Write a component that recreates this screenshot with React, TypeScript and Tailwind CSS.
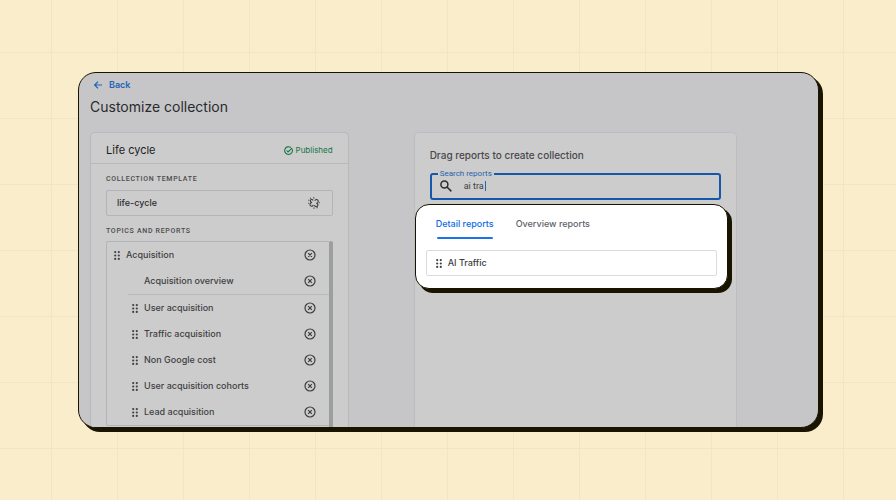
import React from 'react';

const topicRows = [
    { label: 'User acquisition' },
    { label: 'Traffic acquisition' },
    { label: 'Non Google cost' },
    { label: 'User acquisition cohorts' },
    { label: 'Lead acquisition' },
];

const DragHandle: React.FC = () => (
    <svg viewBox="0 0 6 9" className="w-[6px] h-[9px] shrink-0" fill="currentColor" aria-hidden="true">
        {[1.1, 4.5, 7.9].map((y) => (
            <React.Fragment key={y}>
                <circle cx="1.2" cy={y} r="1.1" />
                <circle cx="4.8" cy={y} r="1.1" />
            </React.Fragment>
        ))}
    </svg>
);

const RemoveButton: React.FC<{ label: string }> = ({ label }) => (
    <button type="button" aria-label={`Remove ${label}`} className="ml-auto shrink-0 text-[#3c3d3f]">
        <svg viewBox="0 0 12 12" className="block size-3" fill="none" stroke="currentColor" strokeWidth="1.2">
            <circle cx="6" cy="6" r="5" />
            <path d="M4.2 4.2l3.6 3.6M7.8 4.2L4.2 7.8" />
        </svg>
    </button>
);

const UnlinkIcon: React.FC = () => (
    <svg viewBox="0 0 12 12" className="block size-3" fill="none" stroke="currentColor" strokeWidth="1.1" strokeLinejoin="round">
        <path d="M5.2 3.4C4.2 1.9 2.2 2.4 2.4 4c0 .8.5 1.2 1.2 1.6-1.5.6-2.1 2-1.2 3.1 1 1 2.4.5 3-.7" />
        <path d="M6.4 8.2c.8 1.8 2.5 1.9 3.2.7.6-1 .1-2-.9-2.6 1.4-.7 2-2.1 1.1-3.2-.9-1-2.3-.6-3 .6" />
        <path d="M5.8.3v1.2M2.4.8l.5.9M.4 3.1l.9.4M.2 6.2h1M11.8 5.7h-1M6 11.7v-1.2M9.3 11.2l-.4-.9" />
    </svg>
);

const TemplatePanel: React.FC = () => (
    <section className="rounded-t-[5px] border border-b-0 border-[#b7b9bc] bg-[#cccccc]">
        <div className="flex h-[31px] items-center justify-between border-b border-[#b7b9bc] px-[15px] pt-1">
            <h2 className="text-[11px] text-[#1c1d1f]">Life cycle</h2>
            <span className="flex items-center gap-[3px] text-[8px] text-[#147548]">
                <svg viewBox="0 0 10 10" className="size-[9px]" fill="none" stroke="currentColor" strokeWidth="1.2" aria-hidden="true">
                    <path d="M9.1 3.6A4.3 4.3 0 1 1 7.6 1.6" />
                    <path d="M3 5l1.5 1.6L9.2 2" />
                </svg>
                Published
            </span>
        </div>
        <div className="px-[15px] pb-px">
            <label htmlFor="template" className="block pt-[10px] font-['Roboto',sans-serif] text-[7px] leading-[10px] font-medium tracking-widest text-[#4a4b4d]">
                COLLECTION TEMPLATE
            </label>
            <div className="mt-[6px] flex h-[26px] items-center rounded-[2px] border border-[#b2b4b7] px-[10px] text-[#2d2e30]">
                <input id="template" defaultValue="life-cycle" className="w-0 min-w-0 flex-1 bg-transparent text-[9px] font-medium outline-none" />
                <button type="button" aria-label="Unlink template" className="mr-[2px] text-[#3c3d3f]">
                    <UnlinkIcon />
                </button>
            </div>
            <h3 className="pt-[10px] font-['Roboto',sans-serif] text-[7px] leading-[10px] font-medium tracking-widest text-[#4a4b4d]">
                TOPICS AND REPORTS
            </h3>
            <div className="mt-[5px] flex">
                <ul className="min-w-0 flex-1 rounded-l-[2px] border border-r-0 border-[#b2b4b7] text-[9px] font-medium text-[#3f4042]">
                    <li className="flex h-[26px] items-center pr-[13px] pl-[7px]">
                        <DragHandle />
                        <span className="ml-[6px]">Acquisition</span>
                        <RemoveButton label="Acquisition" />
                    </li>
                    <li className="ml-[21px] flex h-[27px] items-center border-b border-[#b7b9bc] pr-[13px]">
                        <span className="ml-4">Acquisition overview</span>
                        <RemoveButton label="Acquisition overview" />
                    </li>
                    {topicRows.map((row) => (
                        <li key={row.label} className="flex h-[26px] items-center pr-[13px] pl-[25px]">
                            <DragHandle />
                            <span className="ml-[6px]">{row.label}</span>
                            <RemoveButton label={row.label} />
                        </li>
                    ))}
                </ul>
                {/* scrollbar thumb runs past the visible bottom */}
                <div className="-mb-1 w-1 rounded-t-[2px] bg-[#9c9ea0]" />
            </div>
        </div>
    </section>
);

const ReportsCallout: React.FC = () => (
    <div className="mt-1 mr-2 rounded-[14px] border border-[#191400] bg-white px-[10px] pb-[12px] shadow-[4px_4px_0_#191400]">
        <div role="tablist" className="flex gap-[22px] px-[10px] pt-[11px] text-[9px] font-medium">
            <button type="button" role="tab" aria-selected="true" className="flex flex-col text-[#0f6be6]">
                <span className="leading-4">Detail reports</span>
                <span className="mx-px mt-[5px] h-[2px] self-stretch rounded-full bg-[#1a73e8]" />
            </button>
            <button type="button" role="tab" aria-selected="false" className="flex text-[#5f6368]">
                <span className="leading-4">Overview reports</span>
            </button>
        </div>
        <div className="mt-[11px] flex h-[26px] items-center rounded-[2px] border border-[#dadce0] px-[9px] text-[9px] font-medium text-[#3c4043]">
            <DragHandle />
            <span className="ml-[6px]">AI Traffic</span>
        </div>
    </div>
);

const ReportsPanel: React.FC = () => (
    <section className="rounded-t-[5px] border border-b-0 border-[#bcbdc0] bg-[#cccccc]">
        <h2 className="px-[15px] pt-[14px] text-[10px] leading-4 font-medium text-[#48494b]">Drag reports to create collection</h2>
        {/* fieldset lets the label notch the outline */}
        <fieldset className="mx-[15px] mt-[6px] h-[31px] rounded-[3px] border-2 border-[#1558ab] pl-[6px]">
            <legend className="px-[2px] font-['Roboto',sans-serif] text-[8px] leading-[10px] text-[#2465b0]">
                <label htmlFor="search">Search reports</label>
            </legend>
            <div className="flex items-center gap-3 pl-[2px] pt-[1px]">
                <svg viewBox="0 0 12 12" className="size-3 text-[#2d2e30]" fill="none" stroke="currentColor" strokeWidth="1.5" aria-hidden="true">
                    <circle cx="4.4" cy="4.4" r="3.5" />
                    <path d="M7 7l4.4 4.4" />
                </svg>
                <div className="flex items-center">
                    <input id="search" defaultValue="ai tra" className="w-[21px] bg-transparent font-['Roboto',sans-serif] text-[9px] leading-3 text-[#3f4042] outline-none" />
                    <span className="h-[10px] w-px bg-[#2465b0]" />
                </div>
            </div>
        </fieldset>
        <ReportsCallout />
    </section>
);

const App: React.FC = () => (
    <main className="min-h-screen bg-[#faedcb] bg-[linear-gradient(to_right,transparent_32px,#f1e5c6_32px,#f1e5c6_33px,transparent_33px),linear-gradient(to_bottom,transparent_33px,#f1e5c6_33px,#f1e5c6_34px,transparent_34px)] bg-size-[66px_66px] bg-center pt-[72px] pr-[77px] pb-[68px] pl-[78px] font-['Inter',sans-serif]">
        <div className="overflow-hidden rounded-[18px] border border-[#191400] bg-[#c6c6c8] pr-[81px] pl-[11px] shadow-[4px_4px_0_#191400]">
            <a href="#" className="mt-[6px] ml-1 flex w-fit items-center gap-[7px] text-[9px] leading-3 font-semibold text-[#1d63b8]">
                <svg viewBox="0 0 8 8" className="size-2" fill="none" stroke="currentColor" strokeWidth="1.2" aria-hidden="true">
                    <path d="M8 4H.8M4 .6L.7 4 4 7.4" />
                </svg>
                Back
            </a>
            <h1 className="mt-[6px] text-[14px] leading-5 text-[#2a2b2d]">Customize collection</h1>
            <div className="mt-[15px] grid grid-cols-[4fr_5fr] gap-[65px]">
                <TemplatePanel />
                <ReportsPanel />
            </div>
        </div>
    </main>
);

export default App;
